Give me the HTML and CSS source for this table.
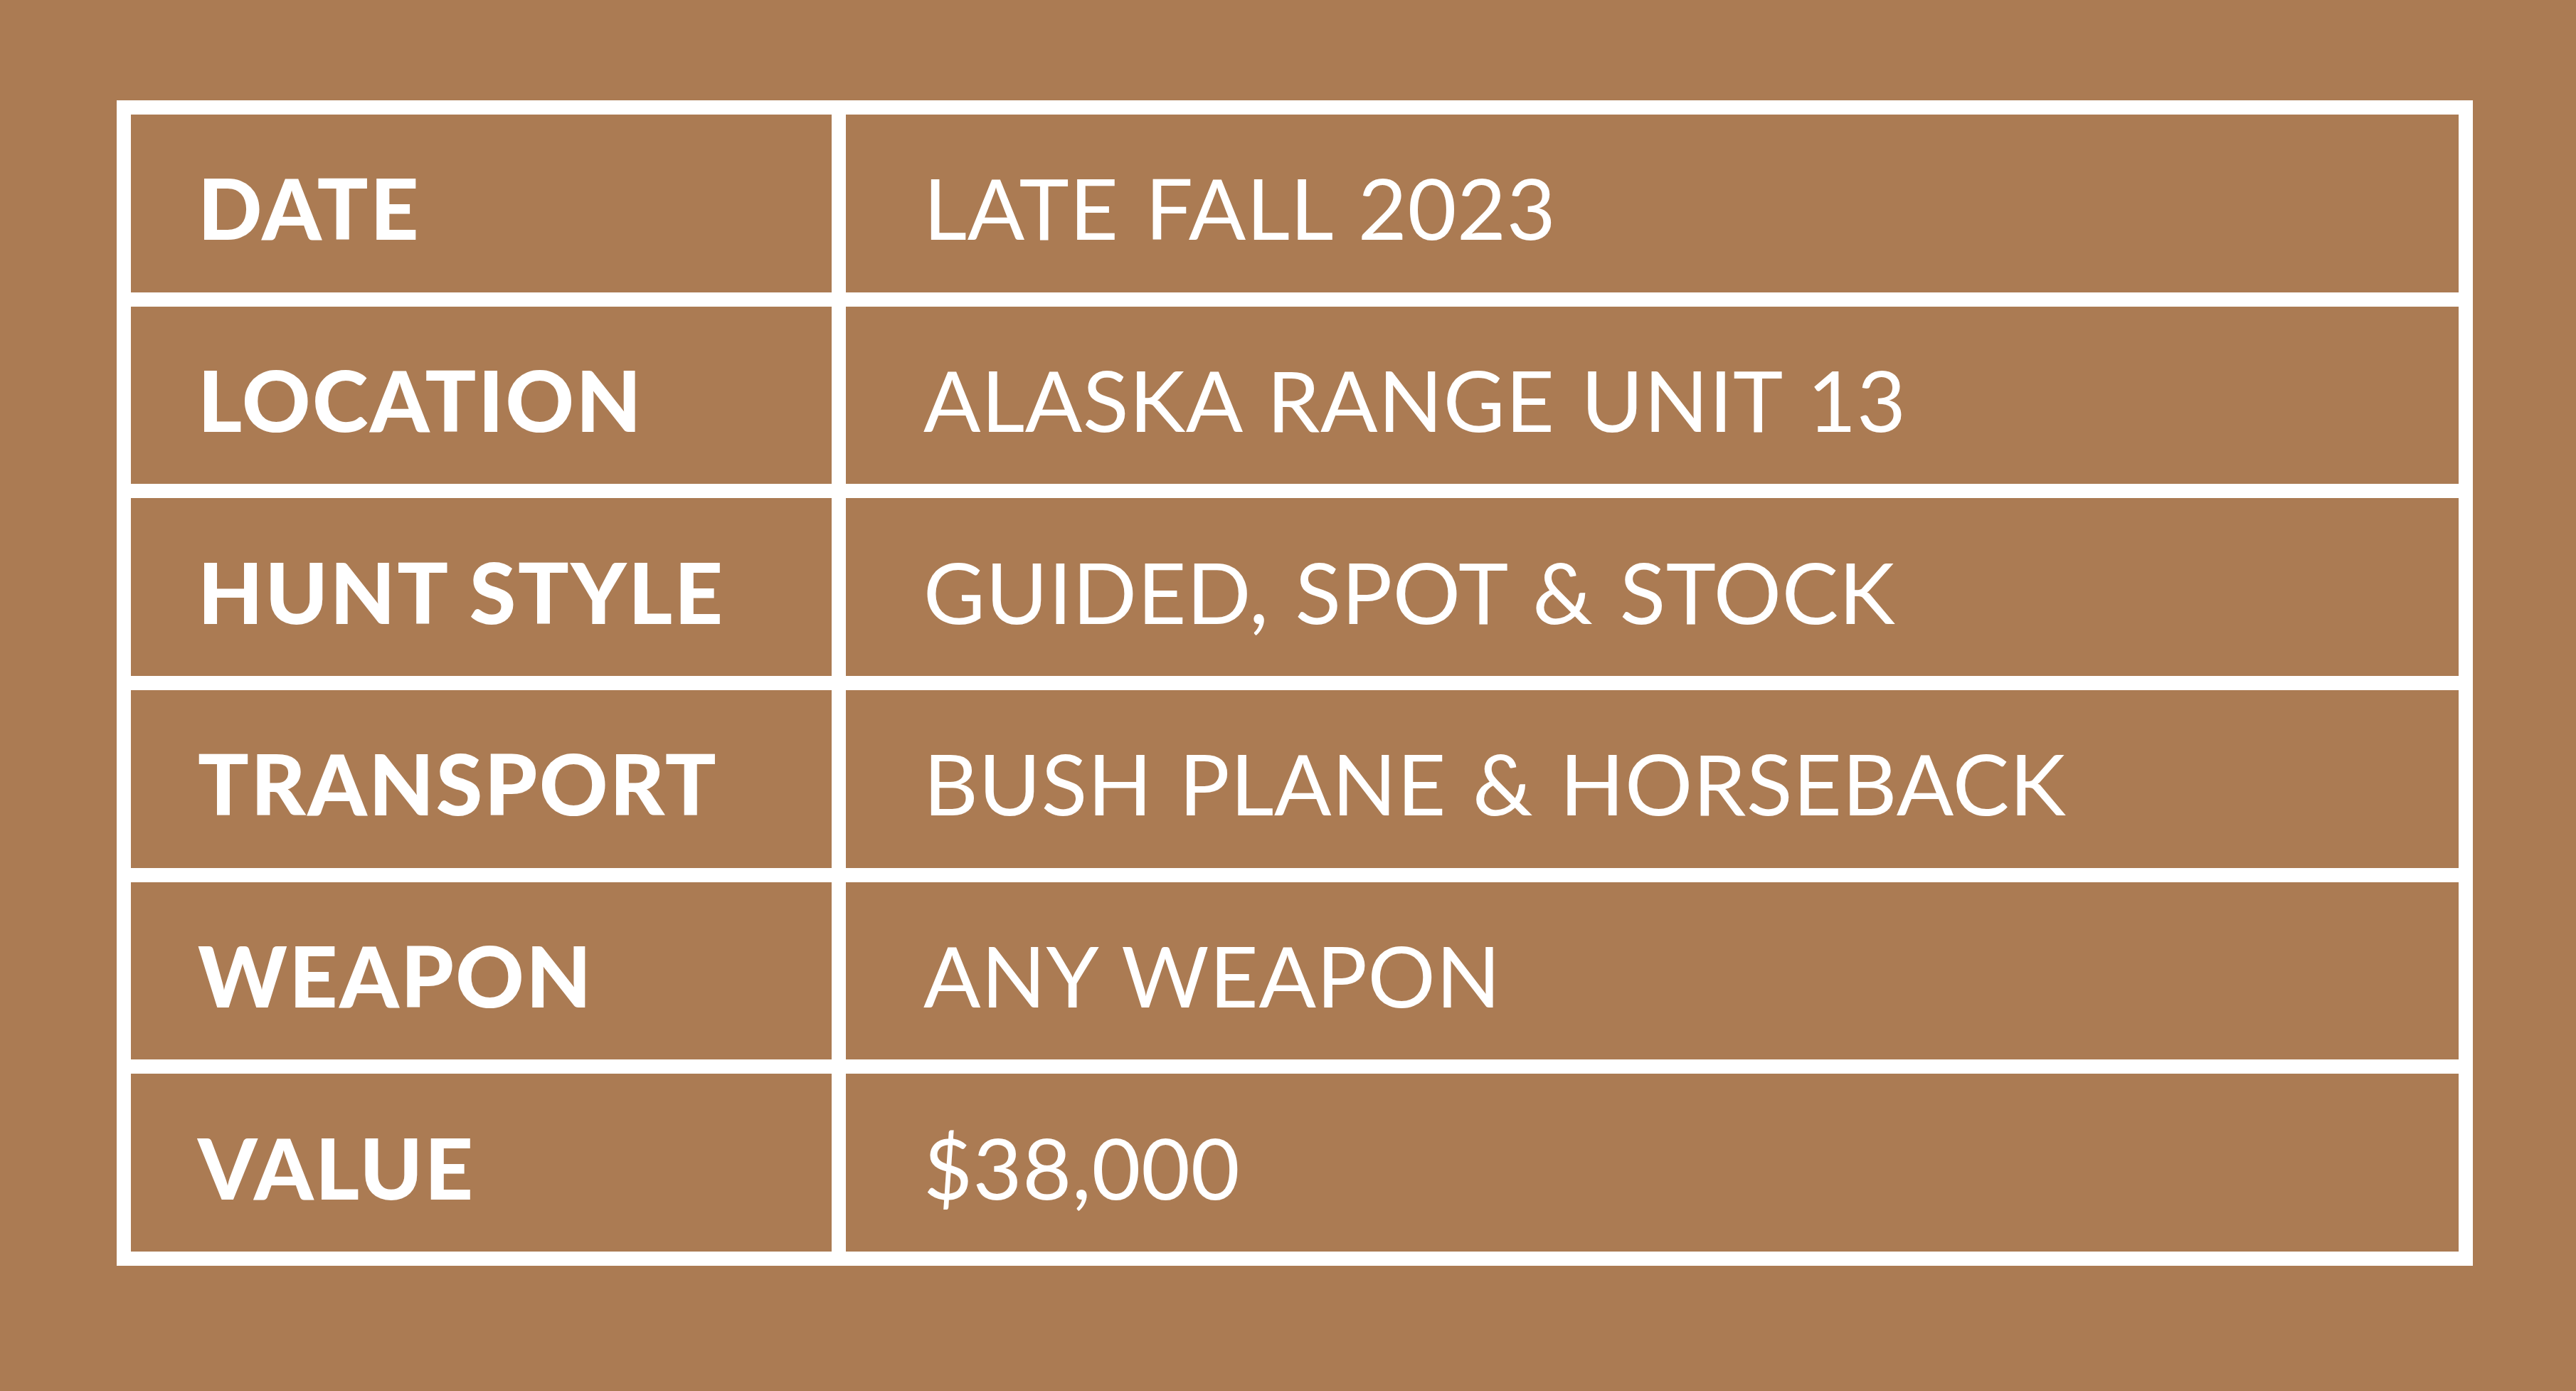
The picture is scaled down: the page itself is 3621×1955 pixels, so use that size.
FILE: index.html
```html
<!DOCTYPE html>
<html lang="en">
<head>
<meta charset="utf-8">
<title>Hunt details</title>
<link rel="stylesheet" href="styles.css">
</head>
<body>
<main class="page">
  <div class="sheet">
    <div class="row"><div class="label">DATE</div><div class="value">LATE FALL 2023</div></div>
    <div class="row"><div class="label">LOCATION</div><div class="value">ALASKA RANGE UNIT 13</div></div>
    <div class="row"><div class="label">HUNT STYLE</div><div class="value">GUIDED, SPOT &amp; STOCK</div></div>
    <div class="row"><div class="label">TRANSPORT</div><div class="value">BUSH PLANE &amp; HORSEBACK</div></div>
    <div class="row"><div class="label">WEAPON</div><div class="value">ANY WEAPON</div></div>
    <div class="row"><div class="label">VALUE</div><div class="value">$38,000</div></div>
  </div>
</main>
</body>
</html>
```
FILE: styles.css
```css
html, body {
  margin: 0;
  padding: 0;
}
body {
  background: #ab7b53;
  width: 3621px;
  height: 1955px;
  overflow: hidden;
  font-family: Lato, "Noto Sans", sans-serif;
  color: #fff;
}
.page {
  padding: 141px 0 0 164px;
}
.sheet {
  box-sizing: border-box;
  width: 3312px;
  height: 1638px;
  background: #fff;
  padding: 20px;
  display: grid;
  grid-template-rows: repeat(6, 1fr);
  row-gap: 20px;
}
.row {
  display: grid;
  grid-template-columns: 985px 1fr;
  column-gap: 20px;
}
.label, .value {
  background: #ab7b53;
  display: flex;
  align-items: center;
  line-height: 1;
  font-size: 119px;
  white-space: nowrap;
  padding-top: 12px;
  box-sizing: border-box;
}
.label {
  font-weight: 900;
  padding-left: 94px;
  letter-spacing: 2.5px;
}
.value {
  font-weight: 400;
  padding-left: 109px;
  letter-spacing: 0.6px;
  word-spacing: 6px;
}
```
